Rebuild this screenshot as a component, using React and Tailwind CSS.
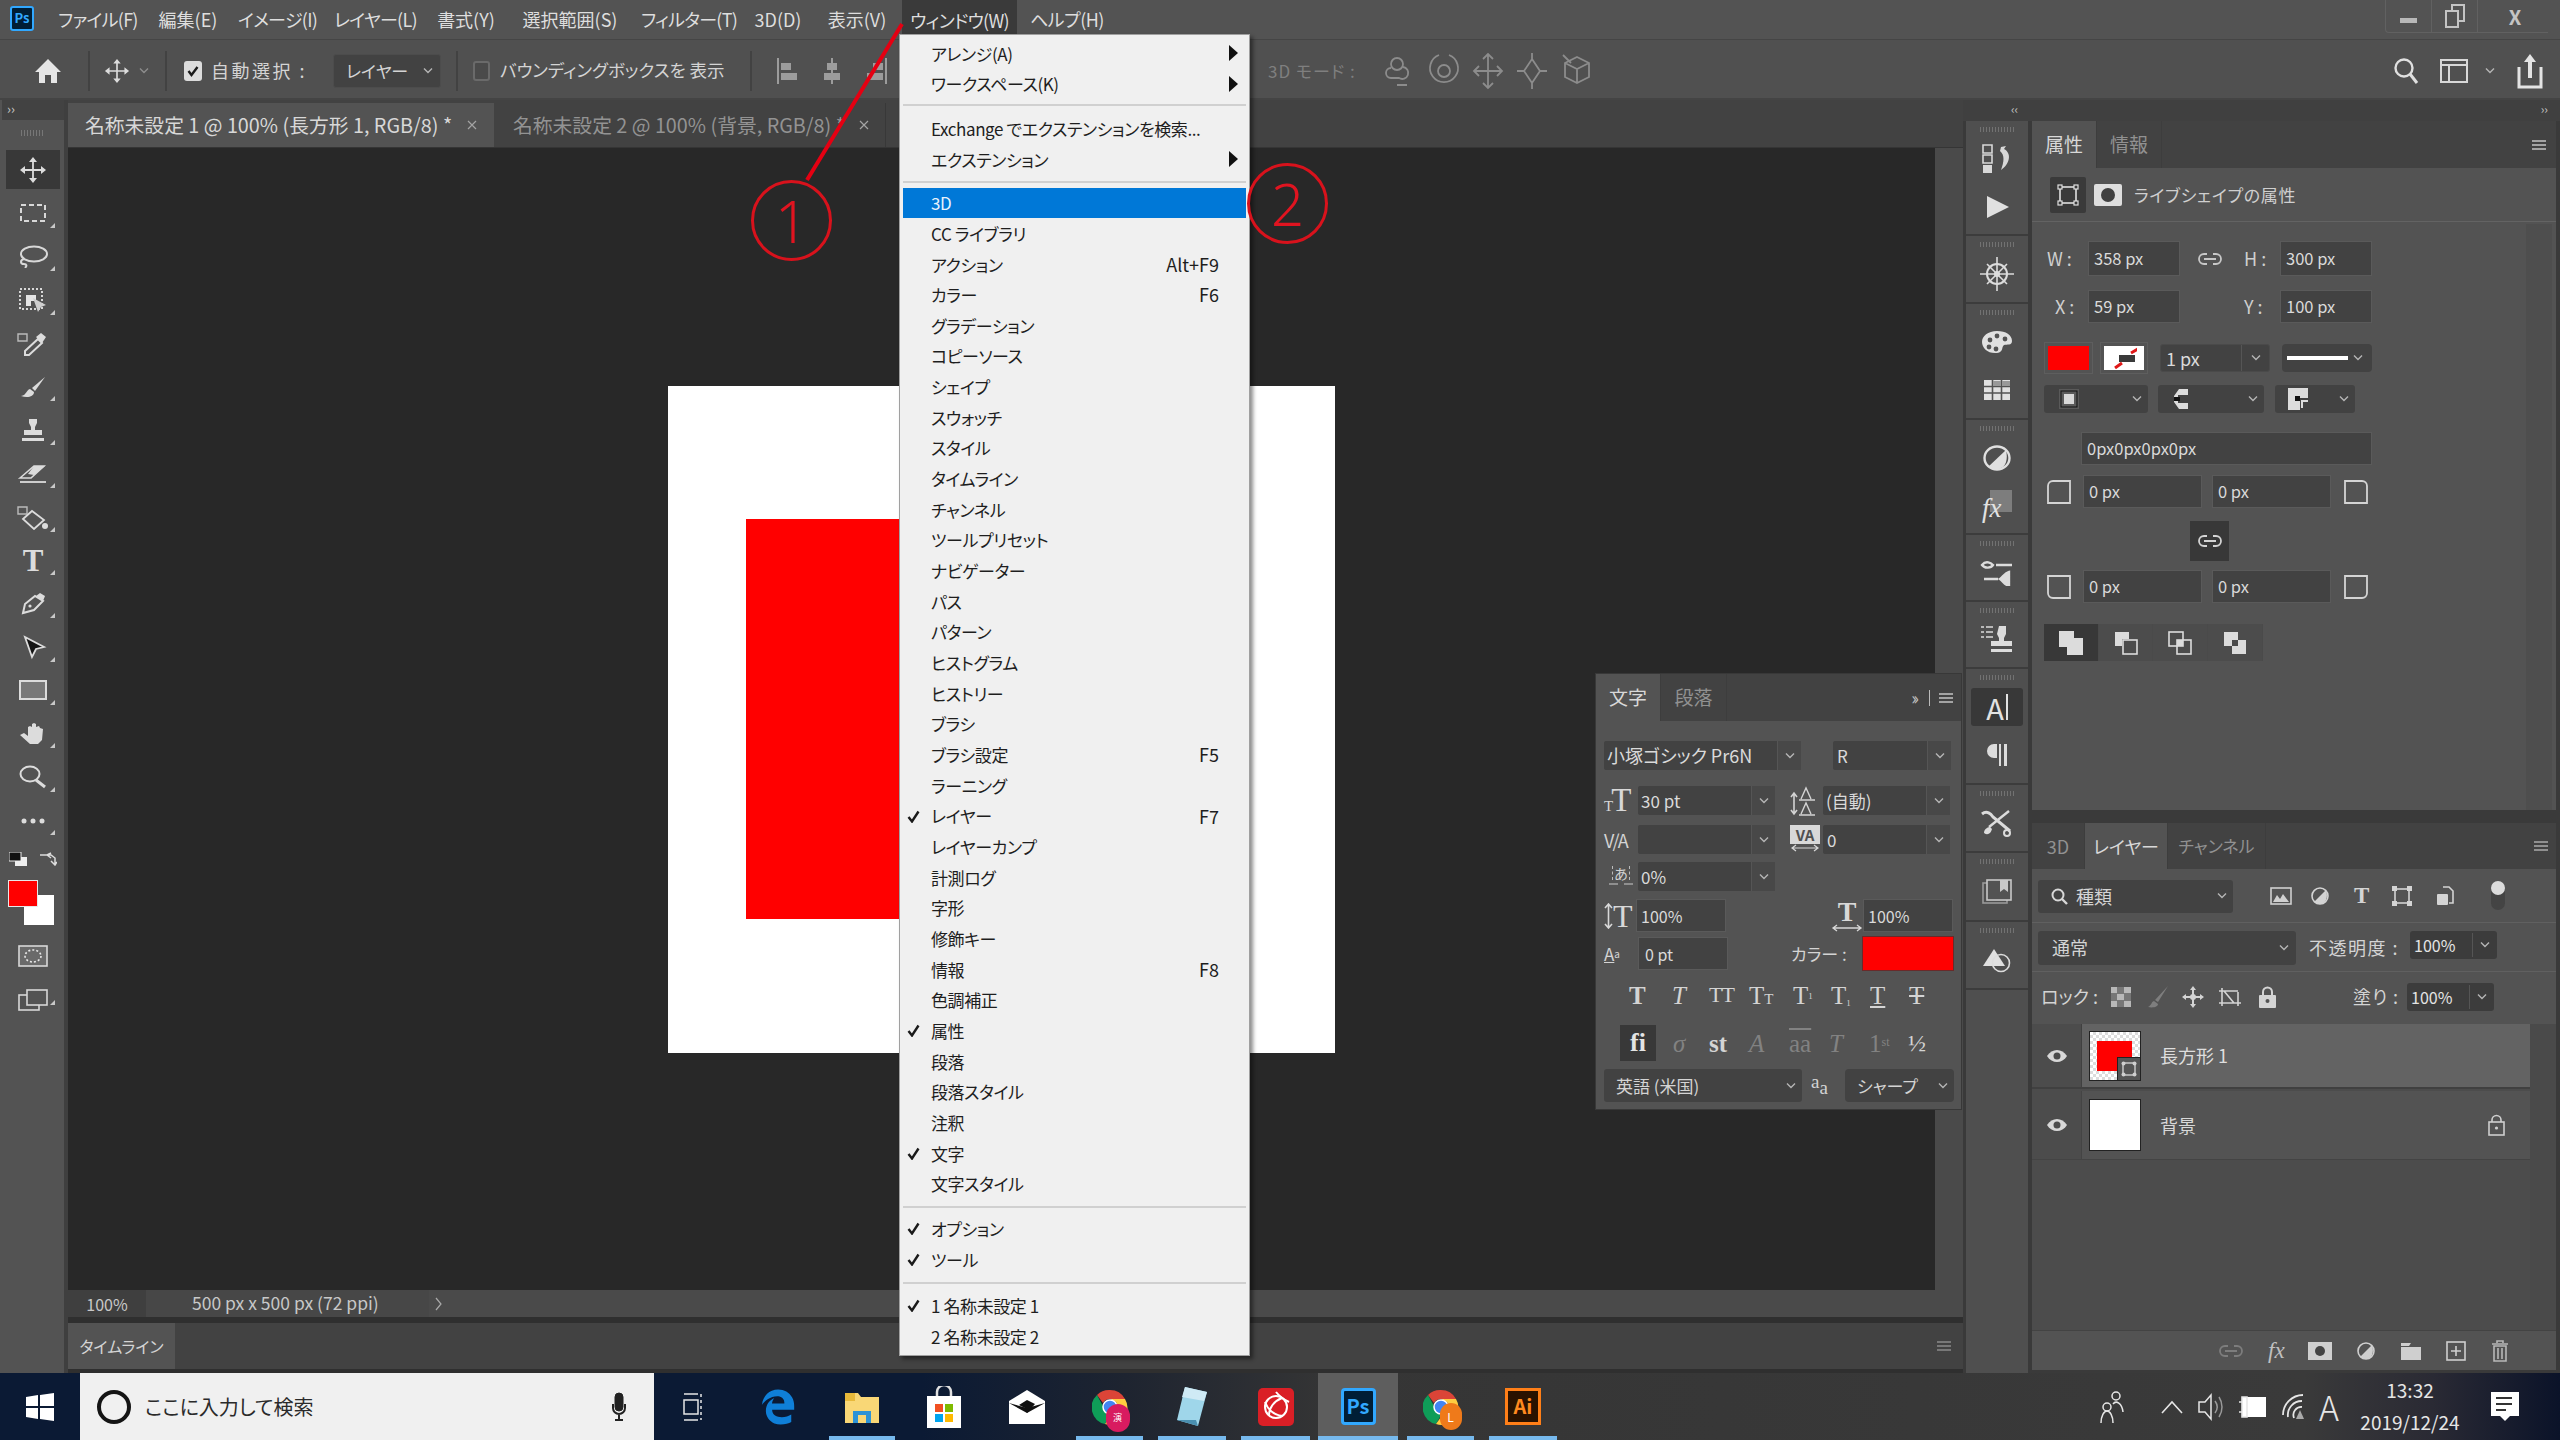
import React from "react";
import { FaEdgeLegacy } from "react-icons/fa6";

const Ic = ({ w = 24, h = 24, className = "", children }) => (
  <svg width={w} height={h} viewBox={`0 0 ${w} ${h}`} fill="none" className={`shrink-0 ${className}`}>
    {children}
  </svg>
);

const Chev = ({ c = "#b5b5b5" }) => (
  <Ic w={12} h={8}>
    <path d="M2 1.5l4 4 4-4" stroke={c} strokeWidth="1.4" />
  </Ic>
);

const Burger = ({ c = "#c4c4c4" }) => (
  <Ic w={14} h={12}>
    <path d="M0 2h14M0 6h14M0 10h14" stroke={c} strokeWidth="1.5" />
  </Ic>
);

const MoveIcon = ({ s = 28 }) => (
  <svg width={s} height={s} viewBox="0 0 28 28" className="shrink-0">
    <path d="M14 1l-4 5h8zM14 27l-4-5h8zM1 14l5-4v8zM27 14l-5-4v8z" fill="#dcdcdc" />
    <path d="M14 5v18M5 14h18" stroke="#dcdcdc" strokeWidth="1.8" />
  </svg>
);

const Corner = () => (
  <span className="absolute right-[9px] bottom-[7px] w-0 h-0 border-l-[5px] border-l-transparent border-b-[5px] border-b-[#c8c8c8]" />
);

const tools = [
  { id: "move", on: true, el: <MoveIcon /> },
  { id: "marquee", el: <Ic w={28} h={24}><rect x="2" y="4" width="24" height="16" stroke="#d8d8d8" strokeWidth="2" strokeDasharray="5 3" /></Ic> },
  { id: "lasso", el: <Ic w={30} h={24}><ellipse cx="16" cy="10" rx="13" ry="7.5" stroke="#d8d8d8" strokeWidth="2" /><path d="M6 15c-4 1-4 5 0 5 3 0 3 2 1 4" stroke="#d8d8d8" strokeWidth="2" /></Ic> },
  { id: "object", el: <Ic w={30} h={26}><rect x="2" y="2" width="22" height="20" stroke="#d8d8d8" strokeWidth="2" strokeDasharray="2 2" /><path d="M8 8h10v6h-5v5H8z" fill="#e4e4e4" /><path d="M15 11l13 7-5 2-3 5z" fill="#cfcfcf" /></Ic> },
  { id: "dropper", el: <Ic w={32} h={26}><path d="M1 4h9v7H1z" stroke="#bbb" strokeWidth="1.4" /><path d="M8 21l13-12 4 4-13 12H8z" stroke="#dcdcdc" strokeWidth="2" /><path d="M19 7l5-4 5 4-4 6z" fill="#dcdcdc" /></Ic> },
  { id: "brush", el: <Ic w={28} h={24}><path d="M26 2L13 13l3 3z" fill="#dcdcdc" /><path d="M11 14c-4 1-3 6-9 7 6 2 13 1 13-4z" fill="#dcdcdc" /></Ic> },
  { id: "stamp", el: <Ic w={28} h={26}><path d="M10 2h8v4l-2 4v3h7v5H5v-5h7v-3l-2-4z" fill="#dcdcdc" /><path d="M3 21h22v3H3z" fill="#dcdcdc" /></Ic> },
  { id: "eraser", el: <Ic w={32} h={24}><path d="M3 17L17 5h10L14 17z" stroke="#dcdcdc" strokeWidth="1.6" /><path d="M17 5h11L17 14l-6-1z" fill="#dcdcdc" /><path d="M3 21h26" stroke="#dcdcdc" strokeWidth="1.8" /></Ic> },
  { id: "fill", el: <Ic w={32} h={26}><path d="M1 3h9v7H1z" stroke="#bbb" strokeWidth="1.4" /><path d="M6 15l9-8 12 9-10 9z" stroke="#dcdcdc" strokeWidth="1.8" /><circle cx="28" cy="22" r="3" fill="#dcdcdc" /></Ic> },
  { id: "type", el: <span className="[font-family:'Liberation_Serif',serif] font-bold text-[31px] leading-none text-[#dcdcdc]">T</span> },
  { id: "pen", el: <Ic w={28} h={24}><path d="M4 21l2-9 10-8 8 5-9 9z" stroke="#dcdcdc" strokeWidth="2" /><path d="M17 4l7 5 2-5-5-3z" fill="#dcdcdc" /><circle cx="11" cy="14" r="1.6" fill="#dcdcdc" /></Ic> },
  { id: "arrow", el: <Ic w={28} h={26}><path d="M6 3l19 10-8 2-4 8z" fill="#141414" stroke="#dcdcdc" strokeWidth="1.8" /></Ic> },
  { id: "rect", el: <Ic w={30} h={24}><rect x="2" y="3" width="26" height="18" fill="#787878" stroke="#dcdcdc" strokeWidth="2" /></Ic> },
  { id: "hand", el: <Ic w={28} h={26}><path d="M1 14l4-2 4 3V6l2-1 2 1V3l2-1 2 1v3l3-1 1 2 3 1-1 11-4 4H11z" fill="#dcdcdc" /></Ic> },
  { id: "zoom", el: <Ic w={30} h={26}><ellipse cx="12" cy="10" rx="9.5" ry="7.5" stroke="#dcdcdc" strokeWidth="2" /><path d="M18 16l9 7" stroke="#dcdcdc" strokeWidth="3" /></Ic> },
  { id: "more", el: <Ic w={28} h={8}><circle cx="5" cy="4" r="2.5" fill="#dcdcdc" /><circle cx="14" cy="4" r="2.5" fill="#dcdcdc" /><circle cx="23" cy="4" r="2.5" fill="#dcdcdc" /></Ic> },
];

const LeftBar = () => (
  <div className="w-[68px] shrink-0 flex border-r-4 border-[#3f3f3f] bg-[#535353] pl-[2px]">
    <div className="w-full flex flex-col">
      <div className="h-[20px] bg-[#424242] text-[#c8c8c8] text-[13px] leading-[18px] pl-[5px]">››</div>
      <div className="h-[28px] flex justify-center pt-[10px]">
        <span className="w-[24px] h-[6px] bg-[repeating-linear-gradient(90deg,#777_0_1px,transparent_1px_3px)]" />
      </div>
      {tools.map((t, i) => (
        <div key={t.id} className="h-[43.4px] flex items-center justify-center relative">
          {t.on && <span className="absolute inset-x-[4px] inset-y-[2px] bg-[#383838]" />}
          <span className="relative flex">{t.el}</span>
          {!t.on && i !== 4 && <Corner />}
        </div>
      ))}
      <div className="flex items-center justify-between px-[7px] mt-[8px] h-[18px]">
        <Ic w={18} h={14}><rect x="6" y="5" width="12" height="9" fill="#eee" /><rect x="0" y="0" width="12" height="9" fill="#111" stroke="#eee" /></Ic>
        <Ic w={18} h={14}><path d="M1 3h11l4 3v6M12 1L8 3l4 3M12 9l4 4 2-3" stroke="#dcdcdc" strokeWidth="1.5" /></Ic>
      </div>
      <div className="h-[46px] mt-[12px] ml-[6px]">
        <div className="w-[30px] h-[27px] bg-[#ff0000] border border-[#e8e8e8] relative z-10" />
        <div className="w-[30px] h-[30px] bg-white ml-[16px] -mt-[12px]" />
      </div>
      <div className="flex justify-center mt-[18px]">
        <Ic w={30} h={24}><rect x="1" y="2" width="28" height="20" fill="#6a6a6a" stroke="#d8d8d8" strokeWidth="1.6" /><ellipse cx="15" cy="12" rx="8" ry="6" stroke="#e8e8e8" strokeWidth="1.6" strokeDasharray="2 2" /></Ic>
      </div>
      <div className="flex justify-center mt-[20px] relative">
        <Ic w={30} h={24}><rect x="1" y="7" width="20" height="15" stroke="#d8d8d8" strokeWidth="1.6" /><rect x="9" y="2" width="20" height="15" fill="#535353" stroke="#d8d8d8" strokeWidth="1.6" /></Ic>
        <Corner />
      </div>
    </div>
  </div>
);

const menuBar = [
  ["ファイル(F)", "w-[80px] ml-[58px] tracking-[-0.7px]"],
  ["編集(E)", "w-[62px] ml-[19px]"],
  ["イメージ(I)", "w-[76px] ml-[19px] tracking-[-0.7px]"],
  ["レイヤー(L)", "w-[80px] ml-[20px] tracking-[-0.7px]"],
  ["書式(Y)", "w-[62px] ml-[21px]"],
  ["選択範囲(S)", "w-[104px] ml-[21px]"],
  ["フィルター(T)", "w-[92px] ml-[19px] tracking-[-0.7px]"],
  ["3D(D)", "w-[52px] ml-[19px]"],
  ["表示(V)", "w-[66px] ml-[20px]"],
];

const MenuBar = () => (
  <div className="h-[40px] shrink-0 bg-[#535353] border-b border-[#454545] flex items-center text-[18px] text-[#dedede] relative">
    <span className="absolute left-[10px] top-[6px] w-[24px] h-[25px] rounded-[3px] bg-[#001e36] border-2 border-[#31a8ff] text-[#31a8ff] text-[13px] leading-[20px] text-center font-semibold">Ps</span>
    {menuBar.map(([t, c]) => (
      <span key={t} className={`${c} whitespace-nowrap shrink-0 text-center`}>{t}</span>
    ))}
    <span className="ml-[12px] w-[115px] h-[40px] bg-[#3a3a3a] text-center leading-[40px] whitespace-nowrap shrink-0 tracking-[-0.7px]">ウィンドウ(W)</span>
    <span className="ml-[13px] w-[73px] text-center whitespace-nowrap shrink-0 tracking-[-0.5px]">ヘルプ(H)</span>
    <div className="ml-auto mr-[12px] w-[163px] h-[33px] self-start rounded-bl-[4px] border-l border-b border-[#616161] flex items-center text-[#c4c4c4]">
      <span className="w-[46px] flex justify-center border-r border-[#616161] h-full items-center"><span className="w-[17px] h-[5px] bg-[#b8b8b8] mt-[8px]" /></span>
      <span className="w-[46px] flex justify-center border-r border-[#616161] h-full items-center">
        <Ic w={24} h={26}><rect x="9" y="2" width="12" height="16" stroke="#c4c4c4" strokeWidth="2" /><rect x="3" y="8" width="12" height="16" fill="#535353" stroke="#c4c4c4" strokeWidth="2" /></Ic>
      </span>
      <span className="flex-1 text-center text-[20px] font-bold leading-[33px] pl-[4px]">X</span>
    </div>
  </div>
);

const VSep = ({ className = "" }) => <span className={`w-[2px] h-[40px] bg-[#424242] shrink-0 ${className}`} />;

const AlignIcon = ({ d }) => (
  <Ic w={22} h={30}><path d={d} fill="#9c9c9c" /></Ic>
);

const Icon3d = ({ children }) => (
  <Ic w={34} h={40}><g stroke="#8c8c8c" strokeWidth="1.8">{children}</g></Ic>
);

const OptionsBar = () => (
  <div className="h-[60px] shrink-0 bg-[#505050] border-b-2 border-[#444] flex items-center text-[18px] text-[#d4d4d4] pt-[3px]">
    <span className="ml-[34px] w-[28px] flex">
      <Ic w={28} h={26}><path d="M14 1L1 14h4v11h6v-8h6v8h6V14h4z" fill="#e6e6e6" /></Ic>
    </span>
    <VSep className="ml-[26px]" />
    <span className="ml-[14px]"><MoveIcon s={26} /></span>
    <span className="ml-[8px]"><Chev c="#8d8d8d" /></span>
    <VSep className="ml-[15px]" />
    <span className="ml-[17px] w-[18px] h-[20px] rounded-[3px] bg-[#dcdcdc] flex items-center justify-center shrink-0">
      <Ic w={12} h={12}><path d="M1.5 6l3 4 6-8" stroke="#1a1a1a" strokeWidth="2.4" /></Ic>
    </span>
    <span className="ml-[9px] w-[99px] whitespace-nowrap tracking-[2.5px]">自動選択 :</span>
    <div className="ml-[23px] w-[108px] h-[34px] bg-[#424242] border border-[#4c4c4c] rounded-[3px] flex items-center pl-[12px] pr-[6px] justify-between text-[17px]">
      <span>レイヤー</span><Chev />
    </div>
    <VSep className="ml-[15px]" />
    <span className="ml-[15px] w-[17px] h-[20px] rounded-[3px] bg-[#4a4a4a] border-2 border-[#6a6a6a] shrink-0" />
    <span className="ml-[10px] w-[226px] whitespace-nowrap text-[17.5px]">バウンディングボックスを 表示</span>
    <VSep className="ml-[24px]" />
    <span className="ml-[24px]"><AlignIcon d="M1 2h2v26H1zM5 7h10v7H5zM5 17h16v7H5z" /></span>
    <span className="ml-[23px]"><AlignIcon d="M10 2h2v26h-2zM6 7h10v7H6zM3 17h16v7H3z" /></span>
    <span className="ml-[23px]"><AlignIcon d="M19 2h2v26h-2zM7 7h10v7H7zM1 17h16v7H1z" /></span>
    <span className="ml-[380px] w-[90px] text-[#7f7f7f] whitespace-nowrap tracking-[1px] text-[17px]">3D モード :</span>
    <div className="ml-[25px] flex gap-[10px]">
      <Icon3d><circle cx="14" cy="13" r="6" /><path d="M20 16a6 6 0 1 1-4 11H8a5 5 0 0 1 0-10M24 34h-10" /></Icon3d>
      <Icon3d><circle cx="17" cy="20" r="6" /><path d="M12 4a14 14 0 1 0 10 0" /></Icon3d>
      <Icon3d><path d="M17 4v32M3 20h28M12 8l5-5 5 5M12 32l5 5 5-5M8 15l-5 5 5 5M26 15l5 5-5 5" /></Icon3d>
      <Icon3d><path d="M17 8l8 12-8 12-8-12zM17 2v8M17 30v8M2 20h8M24 20h8" /></Icon3d>
      <Icon3d><path d="M18 6l12 6v14l-12 6-12-6V12zM6 12l12 6 12-6M18 18v14M4 4l8 8" /></Icon3d>
    </div>
    <div className="ml-auto flex items-center mr-[17px]">
      <Ic w={26} h={28}><circle cx="11" cy="11" r="8.5" stroke="#e0e0e0" strokeWidth="2.4" /><path d="M17 17l7 9" stroke="#e0e0e0" strokeWidth="3" /></Ic>
      <Ic w={28} h={26} className="ml-[21px]"><rect x="1" y="2" width="26" height="22" stroke="#d8d8d8" strokeWidth="2" /><path d="M1 7h26M9 7v17" stroke="#d8d8d8" strokeWidth="2" /></Ic>
      <span className="ml-[16px]"><Chev /></span>
      <Ic w={26} h={36} className="ml-[21px]"><path d="M2 14v20h22V14" stroke="#e4e4e4" strokeWidth="3" /><path d="M13 1l-6 8h4v16h4V9h4z" fill="#e4e4e4" /></Ic>
    </div>
  </div>
);

const X = ({ c }) => (
  <Ic w={12} h={12}><path d="M2 2l8 8M10 2l-8 8" stroke={c} strokeWidth="1.2" /></Ic>
);

const CenterColumn = () => (
  <div className="w-[1895px] shrink-0 flex flex-col bg-[#2f2f2f]">
    <div className="h-[48px] shrink-0 flex pt-[3px] bg-[#424242] text-[19.8px] border-b border-[#353535]">
      <div className="w-[426px] bg-[#535353] flex items-center pl-[17px] text-[#d8d8d8] whitespace-nowrap">
        <span className="w-[381px]">名称未設定 1 @ 100% (長方形 1, RGB/8) *</span><X c="#a4a4a4" />
      </div>
      <div className="w-[392px] border-r border-[#383838] flex items-center pl-[19px] text-[#939393] whitespace-nowrap">
        <span className="w-[345px]">名称未設定 2 @ 100% (背景, RGB/8) *</span><X c="#a4a4a4" />
      </div>
    </div>
    <div className="h-[1142px] flex">
      <div className="flex-1 bg-[#282828] flex items-center justify-center">
        <div className="w-[667px] h-[667px] bg-white pt-[133px] pl-[78px]">
          <div className="w-[477px] h-[400px] bg-[#ff0000]" />
        </div>
      </div>
      <div className="w-[28px] bg-[#4a4a4a]" />
    </div>
    <div className="h-[27px] flex bg-[#4a4a4a] text-[16px] text-[#c8c8c8] items-stretch">
      <span className="w-[78px] bg-[#3f3f3f] flex items-center justify-center">100%</span>
      <span className="w-[283px] bg-[#474747] flex items-center pl-[46px] whitespace-nowrap text-[17.5px]">500 px x 500 px (72 ppi)</span>
      <span className="w-[20px] bg-[#4a4a4a] flex items-center justify-center"><Ic w={8} h={14}><path d="M1 1l5 6-5 6" stroke="#aaa" strokeWidth="1.2" /></Ic></span>
    </div>
    <div className="h-[46px] mt-[6px] bg-[#424242] flex items-stretch">
      <span className="w-[107px] bg-[#535353] flex items-center justify-center text-[16px] text-[#d4d4d4]">タイムライン</span>
      <span className="ml-auto mr-[12px] self-center"><Burger c="#8a8a8a" /></span>
    </div>
  </div>
);

const dockGroups = [
  { h: "h-[115px]", icons: [
    <Ic key="a" w={32} h={30}><path d="M2 1h9v8H2zM2 11h9v8H2z" stroke="#d8d8d8" strokeWidth="1.6" /><path d="M2 21h9v8H2z" fill="#d8d8d8" /><path d="M20 3l5-1-2 3c8 4 6 15-3 21 3-8 4-15-1-19z" fill="#d8d8d8" /></Ic>,
    <Ic key="b" w={26} h={26}><path d="M3 2l22 11L3 24z" fill="#e0e0e0" /></Ic>] },
  { h: "h-[68px]", icons: [
    <Ic key="a" w={34} h={34}><circle cx="17" cy="17" r="10" stroke="#dcdcdc" strokeWidth="2" /><path d="M17 0v34M0 17h34M7 7l20 20M27 7L7 27" stroke="#dcdcdc" strokeWidth="1.6" /><circle cx="17" cy="17" r="3" fill="#dcdcdc" /></Ic>] },
  { h: "h-[116px]", icons: [
    <Ic key="a" w={32} h={24}><path d="M16 1c9 0 15 4 15 10 0 5-5 3-8 4-3 2 0 7-7 8C7 24 1 18 1 12S7 1 16 1z" fill="#e0e0e0" /><circle cx="9" cy="10" r="2.4" fill="#535353" /><circle cx="16" cy="6" r="2.4" fill="#535353" /><circle cx="24" cy="9" r="2.4" fill="#535353" /><circle cx="8" cy="17" r="2.4" fill="#535353" /><circle cx="15" cy="19" r="2.4" fill="#535353" /></Ic>,
    <Ic key="b" w={28} h={22}><rect x="1" y="1" width="26" height="20" fill="#e0e0e0" /><path d="M1 7.5h26M1 14h26M9.5 1v20M18.5 1v20" stroke="#535353" strokeWidth="1.6" /><rect x="10" y="2" width="8" height="5" fill="#999" /><rect x="19" y="2" width="8" height="5" fill="#999" /></Ic>] },
  { h: "h-[115px]", icons: [
    <Ic key="a" w={28} h={26}><ellipse cx="14" cy="13" rx="12.5" ry="11.5" stroke="#e0e0e0" strokeWidth="2.4" /><path d="M23 5L5 22c10 6 22 1 18-17z" fill="#e0e0e0" /></Ic>,
    <div key="b" className="relative w-[30px] h-[32px]">
      <span className="absolute right-0 top-0 w-[22px] h-[22px] bg-[#7d7d7d]" />
      <span className="absolute left-0 bottom-0 [font-family:'Liberation_Serif',serif] italic text-[27px] leading-[27px] text-[#e2e2e2]">fx</span>
    </div>] },
  { h: "h-[67px]", icons: [
    <Ic key="a" w={34} h={26}><path d="M2 5c4-5 9-2 11 0-2 3-8 4-11 0zM16 5h16" stroke="#dcdcdc" strokeWidth="2.4" /><path d="M4 19h14M20 19c3-2 5-6 9-7v14c-4-1-6-5-9-7z" stroke="#dcdcdc" strokeWidth="2.4" fill="#dcdcdc" /></Ic>] },
  { h: "h-[67px]", icons: [
    <Ic key="a" w={34} h={30}><path d="M1 2h3M6 2h7M1 7h3M6 7h7M1 12h3M6 12h7" stroke="#dcdcdc" strokeWidth="1.6" /><path d="M19 1h7v8l-2 4v3h8v5H11v-5h8v-3l-2-4z" fill="#dcdcdc" /><path d="M11 24h21v3H11z" fill="#dcdcdc" /></Ic>] },
  { h: "h-[116px]", on: 0, icons: [
    <div key="a" className="flex items-center text-[29px] text-[#e2e2e2] leading-none"><span>A</span><span className="w-[2px] h-[26px] bg-[#e2e2e2] ml-[2px]" /></div>,
    <Ic key="b" w={24} h={26}><path d="M22 2H9a7 7 0 0 0 0 14h3V2zM14 2v22h2V2zM19 2v22h3V2z" fill="#dcdcdc" /></Ic>] },
  { h: "h-[68px]", icons: [
    <Ic key="a" w={32} h={28}><path d="M1 5c5-4 9 0 11 3l17 14" stroke="#dcdcdc" strokeWidth="3" /><path d="M28 2L8 18" stroke="#dcdcdc" strokeWidth="2.4" /><path d="M3 24c0-5 5-6 6-6l2 2c-1 4-4 7-8 4z" fill="#dcdcdc" /><circle cx="26" cy="24" r="3" stroke="#dcdcdc" strokeWidth="2" /></Ic>] },
  { h: "h-[69px]", icons: [
    <Ic key="a" w={30} h={26}><rect x="1" y="5" width="24" height="20" stroke="#999" strokeWidth="1.6" /><rect x="5" y="2" width="24" height="20" fill="#535353" stroke="#c8c8c8" strokeWidth="1.6" /><path d="M18 2h8v12l-4-3-4 3z" fill="#c8c8c8" /></Ic>] },
  { h: "h-[68px]", icons: [
    <Ic key="a" w={30} h={26}><path d="M12 2l11 17H1z" fill="#e0e0e0" /><circle cx="19" cy="16" r="8.5" stroke="#dcdcdc" strokeWidth="1.6" /></Ic>] },
];

const Grip = () => (
  <span className="h-[14px] shrink-0 w-full flex justify-center pt-[6px]">
    <span className="w-[34px] h-[5px] bg-[repeating-linear-gradient(90deg,#727272_0_1px,transparent_1px_3px)]" />
  </span>
);

const Dock = () => (
  <div className="w-[62px] shrink-0 ml-[3px] bg-[#4f4f4f] border-r-0 flex flex-col">
    {dockGroups.map((g, i) => (
      <div key={i} className={`${g.h} shrink-0 flex flex-col items-center border-b-2 border-[#3c3c3c]`}>
        <Grip />
        {g.icons.map((icon, j) => (
          <div key={j} className={`h-[48px] w-full flex items-center justify-center shrink-0 ${g.on === j ? "px-[5px]" : ""}`}>
            {g.on === j ? <span className="w-full h-[38px] rounded-[3px] bg-[#383838] flex items-center justify-center">{icon}</span> : icon}
          </div>
        ))}
      </div>
    ))}
  </div>
);

const Tab = ({ on, w, children }) => (
  <span className={`${w} shrink-0 flex items-center justify-center border-r border-[#3d3d3d] text-[19px] ${on ? "bg-[#535353] text-[#d8d8d8]" : "text-[#919191]"}`}>
    {children}
  </span>
);

const Field = ({ w, h = "h-[33px]", children, chev, cell, cls = "", r = "" }) => (
  <div className={`${w} ${h} ${cls} ${r} shrink-0 bg-[#424242] border border-[#5a5a5a] flex items-center text-[16.5px] text-[#dadada] whitespace-nowrap`}>
    <span className="flex-1 pl-[5px] overflow-hidden">{children}</span>
    {chev && <span className={`${cell ? "border-l border-[#555] " : ""}w-[28px] h-full flex items-center justify-center`}><Chev /></span>}
  </div>
);

const CornerIcon = ({ d }) => (
  <Ic w={24} h={24}><path d={d} stroke="#d4d4d4" strokeWidth="1.8" /></Ic>
);

const BoolBtn = ({ on, w, children }) => (
  <span className={`${w} h-[37px] flex items-center justify-center border-r border-[#4a4a4a] ${on ? "bg-[#383838]" : "bg-[#4c4c4c]"}`}>{children}</span>
);

const PropertiesPanel = () => (
  <div className="h-[689px] shrink-0 bg-[#535353] flex flex-col">
    <div className="h-[47px] shrink-0 flex bg-[#424242] items-stretch">
      <Tab on w="w-[65px]">属性</Tab>
      <Tab w="w-[65px]">情報</Tab>
      <span className="ml-auto mr-[10px] self-center"><Burger /></span>
    </div>
    <div className="h-[54px] shrink-0 flex items-center border-b border-[#636363] pl-[18px]">
      <span className="w-[36px] h-[36px] bg-[#3a3a3a] rounded-[2px] flex items-center justify-center">
        <Ic w={22} h={22}><rect x="3" y="3" width="16" height="16" stroke="#e0e0e0" strokeWidth="1.6" /><g fill="#3a3a3a" stroke="#e0e0e0" strokeWidth="1.2"><rect x="1" y="1" width="4" height="4" /><rect x="17" y="1" width="4" height="4" /><rect x="1" y="17" width="4" height="4" /><rect x="17" y="17" width="4" height="4" /></g></Ic>
      </span>
      <span className="ml-[8px] w-[28px] h-[22px] bg-[#dedede] rounded-[2px] flex items-center justify-center"><span className="w-[14px] h-[14px] rounded-full bg-[#404040]" /></span>
      <span className="ml-[12px] text-[17px] text-[#cfcfcf] whitespace-nowrap tracking-[0.7px]">ライブシェイプの属性</span>
    </div>
    <div className="flex-1 flex">
      <div className="flex-1 flex flex-col text-[#cfcfcf]">
        <div className="flex items-center mt-[19px] pl-[15px] text-[18px]">
          <span className="w-[41px]">W :</span>
          <Field w="w-[92px]" h="h-[35px]">358 px</Field>
          <span className="ml-[18px] w-[46px]"><Ic w={24} h={14}><path d="M9 2H6a5 5 0 0 0 0 10h3M15 2h3a5 5 0 0 1 0 10h-3M6 7h12" stroke="#c8c8c8" strokeWidth="1.8" /></Ic></span>
          <span className="ml-[0px] w-[36px]">H :</span>
          <Field w="w-[92px]" h="h-[35px]">300 px</Field>
        </div>
        <div className="flex items-center mt-[14px] pl-[23px] text-[18px]">
          <span className="w-[33px]">X :</span>
          <Field w="w-[92px]">59 px</Field>
          <span className="ml-[64px] w-[36px]">Y :</span>
          <Field w="w-[92px]">100 px</Field>
        </div>
        <div className="flex items-center mt-[19px] pl-[12px]">
          <span className="w-[49px] h-[32px] border border-[#5e5e5e] p-[3px] flex"><span className="flex-1 bg-[#ff0000]" /></span>
          <span className="ml-[7px] w-[48px] h-[32px] border border-[#5e5e5e] p-[3px] flex">
            <span className="flex-1 bg-white flex items-center justify-center">
              <Ic w={26} h={22}><path d="M8 8h16v7H8z" fill="#3a3a3a" /><path d="M20 6l7-4M4 21l7-5" stroke="#e01818" strokeWidth="3" /></Ic>
            </span>
          </span>
          <Field w="w-[110px]" h="h-[28px]" cls="ml-[12px] rounded-[3px] !border-[#4a4a4a]" chev cell>
            <span className="text-[18px]">1 px</span>
          </Field>
          <div className="ml-[12px] w-[90px] h-[28px] rounded-[4px] bg-[#424242] flex items-center pl-[5px] gap-[4px]">
            <span className="w-[61px] h-[4px] bg-white" /><Chev />
          </div>
        </div>
        <div className="flex items-center mt-[11px] pl-[12px]">
          <div className="w-[104px] h-[28px] rounded-[3px] bg-[#424242] flex items-center justify-between pl-[14px] pr-[5px]">
            <Ic w={22} h={24}><rect x="1" y="2" width="20" height="20" fill="#5a5a5a" /><rect x="3" y="4" width="16" height="16" stroke="#111" /><rect x="6" y="7" width="10" height="10" fill="#d8d8d8" /></Ic><Chev />
          </div>
          <div className="ml-[10px] w-[106px] h-[28px] rounded-[3px] bg-[#424242] flex items-center justify-between pl-[15px] pr-[5px]">
            <Ic w={16} h={20}><path d="M6 0h9v6H5v8h10v6H6l-5-7V7z" fill="#dcdcdc" /><rect x="1" y="8" width="6" height="4" fill="#111" /></Ic><Chev />
          </div>
          <div className="ml-[11px] w-[80px] h-[28px] rounded-[3px] bg-[#424242] flex items-center justify-between pl-[13px] pr-[5px]">
            <Ic w={22} h={22}><path d="M0 0h20v10h-8v12H0z" fill="#dcdcdc" /><path d="M13 12h7v2h-5v6h-2z" fill="#dcdcdc" /><rect x="7" y="8" width="5" height="5" fill="#111" /></Ic><Chev />
          </div>
        </div>
        <div className="flex mt-[19px] pl-[49px]">
          <Field w="w-[291px]">0px0px0px0px</Field>
        </div>
        <div className="flex items-center mt-[10px] pl-[15px]">
          <CornerIcon d="M6 1h17v22H1V6a5 5 0 0 1 5-5z" />
          <Field w="w-[119px]" cls="ml-[12px]">0 px</Field>
          <Field w="w-[119px]" cls="ml-[10px]">0 px</Field>
          <span className="ml-[13px]"><CornerIcon d="M1 1h17a5 5 0 0 1 5 5v17H1z" /></span>
        </div>
        <div className="flex mt-[13px] pl-[158px]">
          <span className="w-[39px] h-[40px] bg-[#383838] flex items-center justify-center">
            <Ic w={24} h={14}><path d="M9 2H6a5 5 0 0 0 0 10h3M15 2h3a5 5 0 0 1 0 10h-3M6 7h12" stroke="#d4d4d4" strokeWidth="1.8" /></Ic>
          </span>
        </div>
        <div className="flex items-center mt-[9px] pl-[15px]">
          <CornerIcon d="M1 1h22v22H6a5 5 0 0 1-5-5z" />
          <Field w="w-[119px]" cls="ml-[12px]">0 px</Field>
          <Field w="w-[119px]" cls="ml-[10px]">0 px</Field>
          <span className="ml-[13px]"><CornerIcon d="M1 1h22v17a5 5 0 0 1-5 5H1z" /></span>
        </div>
        <div className="flex mt-[21px] pl-[12px]">
          <BoolBtn on w="w-[55px]"><Ic w={26} h={26}><path d="M1 1h15v7h9v17H9v-8H1z" fill="#dcdcdc" /></Ic></BoolBtn>
          <BoolBtn w="w-[54px]"><Ic w={24} h={24}><path d="M1 1h14v7H8v7H1z" fill="#dcdcdc" /><rect x="9" y="9" width="14" height="14" stroke="#dcdcdc" strokeWidth="1.6" /></Ic></BoolBtn>
          <BoolBtn w="w-[55px]"><Ic w={24} h={24}><rect x="1" y="1" width="14" height="14" stroke="#dcdcdc" strokeWidth="1.6" /><rect x="9" y="9" width="14" height="14" stroke="#dcdcdc" strokeWidth="1.6" /><rect x="9" y="9" width="6" height="6" fill="#dcdcdc" /></Ic></BoolBtn>
          <BoolBtn w="w-[55px]"><Ic w={24} h={24}><path d="M1 1h14v8H9v6H1zM15 9h8v14H9v-8h6z" fill="#dcdcdc" /></Ic></BoolBtn>
        </div>
      </div>
      <div className="w-[26px] bg-[#4e4e4e] mr-[4px] mt-[2px]" />
    </div>
  </div>
);

const Eye = () => (
  <Ic w={22} h={14}><path d="M1 7c5-8 15-8 20 0-5 8-15 8-20 0z" fill="#d8d8d8" /><circle cx="11" cy="7" r="3.5" fill="#4c4c4c" /></Ic>
);

const LayersPanel = () => (
  <div className="h-[547px] mt-[13px] shrink-0 bg-[#535353] flex flex-col text-[#d4d4d4]">
    <div className="h-[46px] shrink-0 flex bg-[#424242] items-stretch">
      <Tab w="w-[53px]"><span className="text-[18px]">3D</span></Tab>
      <Tab on w="w-[83px]"><span className="text-[18px]">レイヤー</span></Tab>
      <Tab w="w-[98px]"><span className="text-[17px]">チャンネル</span></Tab>
      <span className="ml-auto mr-[8px] self-center"><Burger c="#aaa" /></span>
    </div>
    <div className="h-[54px] shrink-0 border-b border-[#606060] flex items-center pl-[6px]">
      <div className="w-[195px] h-[33px] mt-[1px] rounded-[3px] bg-[#424242] flex items-center pl-[12px] pr-[5px] text-[18px]">
        <Ic w={18} h={18}><circle cx="8" cy="8" r="5.5" stroke="#d8d8d8" strokeWidth="2" /><path d="M12 12l5 5" stroke="#d8d8d8" strokeWidth="2.4" /></Ic>
        <span className="ml-[8px] flex-1">種類</span><Chev />
      </div>
      <Ic w={22} h={18} className="ml-[37px]"><rect x="1" y="1" width="20" height="16" stroke="#d0d0d0" strokeWidth="1.6" /><path d="M3 15l4-7 3 4 3-5 6 8z" fill="#d0d0d0" /></Ic>
      <Ic w={20} h={20} className="ml-[18px]"><circle cx="10" cy="10" r="8" stroke="#d4d4d4" strokeWidth="1.6" /><path d="M16 4L4 16c6 5 16 1 12-12z" fill="#d4d4d4" /></Ic>
      <span className="ml-[24px] w-[16px] [font-family:'Liberation_Serif',serif] font-bold text-[23px] leading-none">T</span>
      <Ic w={20} h={20} className="ml-[22px]"><rect x="3" y="3" width="14" height="14" stroke="#d4d4d4" strokeWidth="1.6" /><g fill="#d4d4d4"><rect x="0" y="0" width="5" height="5" /><rect x="15" y="0" width="5" height="5" /><rect x="0" y="15" width="5" height="5" /><rect x="15" y="15" width="5" height="5" /></g></Ic>
      <Ic w={18} h={20} className="ml-[24px]"><path d="M7 1h6l4 4v12h-4" stroke="#d4d4d4" strokeWidth="1.6" /><rect x="1" y="8" width="11" height="11" rx="1" fill="#d4d4d4" /></Ic>
      <span className="ml-[37px] w-[14px] h-[26px] rounded-full bg-[#444] relative mt-[3px]">
        <span className="absolute left-0 -top-[3px] w-[14px] h-[14px] rounded-full bg-[#dcdcdc]" />
      </span>
    </div>
    <div className="h-[49px] shrink-0 border-b border-[#606060] flex items-center pl-[6px]">
      <div className="w-[258px] h-[34px] mt-[1px] rounded-[3px] bg-[#424242] flex items-center justify-between pl-[14px] pr-[6px] text-[18px]">
        通常<Chev />
      </div>
      <span className="ml-[13px] w-[101px] text-[18px] whitespace-nowrap tracking-[1.5px]">不透明度 :</span>
      <div className="w-[87px] h-[28px] -mt-[4px] rounded-[3px] bg-[#3c3c3c] flex items-center text-[16px] text-[#e4e4e4]">
        <span className="w-[63px] pl-[4px] border-r border-[#555]">100%</span><span className="flex-1 flex justify-center"><Chev /></span>
      </div>
    </div>
    <div className="h-[52px] shrink-0 flex items-center pl-[9px] pb-[3px] text-[18px]">
      <span className="w-[68px] whitespace-nowrap">ロック :</span>
      <Ic w={20} h={20} className="ml-[2px]"><rect width="20" height="20" fill="#777" /><path d="M0 0h6v6H0zM13 0h7v6h-7zM6 7h7v6H6zM0 14h6v6H0zM13 14h7v6h-7z" fill="#b8b8b8" /></Ic>
      <Ic w={24} h={24} className="ml-[15px]"><path d="M22 1L9 15l3 2zM8 16c-3 1-2 4-6 6 5 1 10 0 10-3z" fill="#7e7e7e" /></Ic>
      <Ic w={22} h={22} className="ml-[12px]"><path d="M11 0L8 4h6zM11 22l-3-4h6zM0 11l4-3v6zM22 11l-4-3v6z" fill="#d4d4d4" /><path d="M11 3v16M3 11h16" stroke="#d4d4d4" strokeWidth="2" /><circle cx="11" cy="11" r="3" fill="#d4d4d4" /></Ic>
      <Ic w={24} h={20} className="ml-[14px]"><path d="M4 1v18M20 5v14M1 4h19M1 16h22M6 4l10 12" stroke="#d4d4d4" strokeWidth="1.6" /></Ic>
      <Ic w={17} h={22} className="ml-[17px]"><path d="M4 9V6a4.5 4.5 0 0 1 9 0v3" stroke="#d4d4d4" strokeWidth="2" /><rect y="9" width="17" height="13" rx="1" fill="#d4d4d4" /><circle cx="8.5" cy="15" r="2" fill="#535353" /></Ic>
      <span className="ml-[68px] w-[55px] whitespace-nowrap text-right tracking-[1px]">塗り :</span>
      <div className="ml-[8px] w-[87px] h-[28px] rounded-[3px] bg-[#3c3c3c] flex items-center text-[16px] text-[#e4e4e4]">
        <span className="w-[63px] pl-[4px] border-r border-[#555]">100%</span><span className="flex-1 flex justify-center"><Chev /></span>
      </div>
    </div>
    <div className="flex-1 flex bg-[#4c4c4c]">
      <div className="w-[498px] flex flex-col">
        <div className="h-[65px] flex border-b-2 border-[#404040]">
          <span className="w-[50px] flex items-center justify-center border-r border-[#404040]"><Eye /></span>
          <div className="flex-1 bg-[#636363] flex items-center pl-[7px]">
            <div className="w-[52px] h-[50px] bg-white border border-[#222] pl-[7px] pt-[9px] relative bg-[repeating-conic-gradient(#dcdcdc_0_25%,#ffffff_0_50%)] bg-[length:6px_6px]">
              <div className="w-[35px] h-[30px] bg-[#ff0000]" />
              <span className="absolute right-[-1px] bottom-[-1px] w-[24px] h-[24px] bg-[#555] border border-[#222] flex items-center justify-center">
                <Ic w={16} h={16}><rect x="2" y="2" width="12" height="12" stroke="#cfcfcf" strokeWidth="1.4" /><g fill="#cfcfcf"><circle cx="2.5" cy="2.5" r="2" /><circle cx="13.5" cy="2.5" r="2" /><circle cx="2.5" cy="13.5" r="2" /><circle cx="13.5" cy="13.5" r="2" /></g></Ic>
              </span>
            </div>
            <span className="ml-[19px] text-[18px] text-[#dedede]">長方形 1</span>
          </div>
        </div>
        <div className="h-[69px] mt-[2px] flex border-b border-[#444]">
          <span className="w-[50px] flex items-center justify-center border-r border-[#444]"><Eye /></span>
          <div className="flex-1 bg-[#535353] flex items-center pl-[7px]">
            <div className="w-[52px] h-[52px] bg-white border border-[#222]" />
            <span className="ml-[19px] text-[18px] text-[#d8d8d8]">背景</span>
            <Ic w={17} h={22} className="ml-auto mr-[25px]"><path d="M4 8V6a4.5 4.5 0 0 1 9 0v2" stroke="#cfcfcf" strokeWidth="1.6" /><rect x="1" y="8" width="15" height="13" stroke="#cfcfcf" strokeWidth="1.6" /><circle cx="8.5" cy="14" r="1.6" fill="#cfcfcf" /></Ic>
          </div>
        </div>
      </div>
      <div className="w-[26px] bg-[#4a4a4a]" />
    </div>
    <div className="h-[40px] shrink-0 bg-[#535353] border-t border-[#434343] flex items-center pl-[187px]">
      <Ic w={24} h={14}><path d="M9 2H6a5 5 0 0 0 0 10h3M15 2h3a5 5 0 0 1 0 10h-3M6 7h12" stroke="#7d7d7d" strokeWidth="1.8" /></Ic>
      <span className="ml-[25px] w-[24px] [font-family:'Liberation_Serif',serif] italic text-[23px] leading-none text-[#c0c0c0]">fx</span>
      <span className="ml-[16px] w-[24px] h-[18px] bg-[#cfcfcf] flex items-center justify-center"><span className="w-[10px] h-[10px] rounded-full bg-[#444]" /></span>
      <Ic w={20} h={20} className="ml-[24px]"><circle cx="10" cy="10" r="8" stroke="#cfcfcf" strokeWidth="1.6" /><path d="M16 4L4 16c6 5 16 1 12-12z" fill="#cfcfcf" /></Ic>
      <Ic w={20} h={18} className="ml-[25px]"><path d="M0 4h8l2-3H0zM0 5h20v13H0z" fill="#cfcfcf" /></Ic>
      <Ic w={20} h={20} className="ml-[25px]"><rect x="1" y="1" width="18" height="18" stroke="#cfcfcf" strokeWidth="1.6" /><path d="M10 5v10M5 10h10" stroke="#cfcfcf" strokeWidth="1.6" /></Ic>
      <Ic w={18} h={22} className="ml-[25px]"><path d="M1 4h16M6 3V1h6v2M3 6h12v15H3zM7 8v11M11 8v11" stroke="#b8b8b8" strokeWidth="1.6" /></Ic>
    </div>
  </div>
);

const RightColumn = () => (
  <div className="flex-1 flex flex-col bg-[#3a3a3a]">
    <div className="h-[21px] shrink-0 bg-[#404040] relative text-[12px] leading-[18px] text-[#c4c4c4] flex justify-between pl-[48px] pr-[12px]">
      <span>‹‹</span><span>››</span>
    </div>
    <div className="flex-1 flex">
      <Dock />
      <div className="w-[524px] ml-[4px] flex flex-col">
        <PropertiesPanel />
        <LayersPanel />
      </div>
    </div>
  </div>
);

const CharField = ({ w, cls = "", children, chev }) => (
  <div className={`${w} ${cls} h-[29px] shrink-0 rounded-[2px] bg-[#424242] flex items-center text-[17px] text-[#dadada] whitespace-nowrap`}>
    <span className="flex-1 pl-[3px] overflow-hidden">{children}</span>
    {chev && <span className="w-[24px] h-full border-l border-[#555] flex items-center justify-center bg-[#484848]"><Chev /></span>}
  </div>
);

const CharFlat = ({ w, h = "h-[33px]", cls = "", children }) => (
  <div className={`${w} ${h} ${cls} shrink-0 bg-[#424242] border border-[#5a5a5a] flex items-center pl-[4px] text-[16px] text-[#dadada]`}>{children}</div>
);

const serif = "[font-family:'Liberation_Serif',serif]";

const CharacterPanel = () => (
  <div className="absolute left-[1595px] top-[673px] w-[367px] h-[437px] bg-[#535353] border border-[#383838] flex flex-col text-[#d4d4d4]">
    <div className="h-[47px] shrink-0 flex bg-[#424242] items-stretch">
      <Tab on w="w-[65px]">文字</Tab>
      <Tab w="w-[66px]">段落</Tab>
      <span className="ml-auto mr-[8px] flex items-center gap-[9px]">
        <span className="text-[#c0c0c0] text-[18px] tracking-[-3px]">››</span>
        <span className="w-[1px] h-[16px] bg-[#bbb] ml-[4px]" />
        <Burger />
      </span>
    </div>
    <div className="flex mt-[20px] pl-[8px]">
      <CharField w="w-[197px]" chev><span className="text-[18px]">小塚ゴシック Pr6N</span></CharField>
      <CharField w="w-[118px]" cls="ml-[32px]" chev><span className="pl-[1px]">R</span></CharField>
    </div>
    <div className="flex items-center mt-[14px] pl-[8px]">
      <span className={`${serif} w-[34px] flex items-baseline leading-none text-[#d8d8d8]`}><span className="text-[15px]">T</span><span className="text-[33px] -ml-[2px]">T</span></span>
      <CharField w="w-[137px]" chev>30 pt</CharField>
      <Ic w={28} h={30} className="ml-[15px]"><path d="M4 8v20M1 11l3-4 3 4M1 24l3 4 3-4" stroke="#d4d4d4" strokeWidth="1.6" /><path d="M11 13l5-11 5 11M11 28l5-11 5 11M9 14h16M9 29h16" stroke="#d4d4d4" strokeWidth="1.4" /></Ic>
      <CharField w="w-[127px]" cls="ml-[5px]" chev>(自動)</CharField>
    </div>
    <div className="flex items-center mt-[8px] pl-[8px]">
      <span className="w-[34px] text-[18px] leading-none tracking-[-1px]">V/A</span>
      <CharField w="w-[137px]" chev />
      <span className="ml-[15px] w-[30px] flex flex-col items-center -mt-[2px]">
        <span className="bg-[#d8d8d8] text-[#505050] text-[15px] font-bold leading-[19px] w-[30px] text-center">VA</span>
        <Ic w={30} h={8}><path d="M3 4h24M6 1L2 4l4 3M24 1l4 3-4 3" stroke="#d8d8d8" strokeWidth="1.2" /></Ic>
      </span>
      <CharField w="w-[127px]" cls="ml-[3px]" chev><span className="pl-[1px]">0</span></CharField>
    </div>
    <div className="flex items-center mt-[8px] pl-[8px]">
      <span className="w-[34px] text-[14px] leading-none flex flex-col items-center">
        <span className="border-x border-dashed border-[#bbb] px-[1px]">あ</span>
        <Ic w={26} h={8}><path d="M1 4h9M16 4h9" stroke="#ccc" strokeWidth="1.2" /></Ic>
      </span>
      <CharField w="w-[137px]" chev>0%</CharField>
    </div>
    <div className="flex items-center mt-[8px] pl-[8px]">
      <span className={`${serif} w-[32px] flex items-center text-[32px] leading-none text-[#d8d8d8]`}>
        <Ic w={9} h={26}><path d="M4.5 1v24M1 5l3.5-4L8 5M1 21l3.5 4L8 21" stroke="#d8d8d8" strokeWidth="1.6" /></Ic>T
      </span>
      <CharFlat w="w-[90px]">100%</CharFlat>
      <span className={`${serif} ml-[105px] w-[32px] flex flex-col items-center text-[28px] font-bold leading-[24px] text-[#d8d8d8]`}>
        T
        <Ic w={32} h={8}><path d="M3 4h26M6 1L2 4l4 3M26 1l4 3-4 3" stroke="#d8d8d8" strokeWidth="1.3" /></Ic>
      </span>
      <CharFlat w="w-[90px]">100%</CharFlat>
    </div>
    <div className="flex items-center mt-[4px] pl-[8px]">
      <span className="w-[34px] flex items-center text-[17px] leading-none border-b-0"><span className="underline">A</span><span className="text-[10px] leading-none">a</span></span>
      <CharFlat w="w-[90px]"><span className="pl-[2px]">0 pt</span></CharFlat>
      <span className="ml-[63px] w-[71px] text-[17px] whitespace-nowrap">カラー :</span>
      <span className="w-[92px] h-[35px] bg-[#ff0000] border border-[#6a2a2a]" />
    </div>
    <div className={`${serif} h-[32px] mt-[8px] flex items-center text-[#d4d4d4] text-[25px] leading-none pl-[33px]`}>
      <span className="w-[40px] font-bold">T</span>
      <span className="w-[40px] italic pl-[3px]">T</span>
      <span className="w-[40px] tracking-[-1px] text-[22px]">TT</span>
      <span className="w-[39px]">T<span className="text-[15px]">T</span></span>
      <span className="w-[40px] pl-[5px]">T<sup className="text-[9px]">1</sup></span>
      <span className="w-[39px] pl-[3px]">T<sub className="text-[9px]">1</sub></span>
      <span className="w-[40px] underline pl-[3px]">T</span>
      <span className="w-[30px] line-through pl-[2px]">T</span>
    </div>
    <div className={`${serif} h-[36px] mt-[14px] flex items-center text-[25px] leading-none pl-[24px]`}>
      <span className="w-[36px] h-[36px] bg-[#383838] flex items-center justify-center text-[#e4e4e4] font-bold text-[26px]">fi</span>
      <span className="w-[40px] ml-[13px] italic text-[#828282] pl-[4px]">σ</span>
      <span className="w-[40px] text-[#d4d4d4] font-bold">st</span>
      <span className="w-[40px] italic text-[#828282]">A</span>
      <span className="w-[40px] text-[#828282] overline">aa</span>
      <span className="w-[40px] italic text-[#828282]">T</span>
      <span className="w-[39px] text-[#828282]">1<sup className="text-[12px]">st</sup></span>
      <span className="w-[24px] text-[#d4d4d4] text-[24px]">½</span>
    </div>
    <div className="flex items-center mt-[8px] pl-[8px]">
      <div className="w-[198px] h-[33px] rounded-[3px] bg-[#424242] flex items-center justify-between pl-[12px] pr-[5px] text-[17px]">
        英語 (米国)<Chev />
      </div>
      <span className={`${serif} ml-[9px] w-[34px] text-[19px] leading-none flex`}><span className="-mt-[3px]">a</span><span className="mt-[3px]">a</span></span>
      <div className="w-[109px] h-[33px] rounded-[4px] bg-[#424242] flex items-center justify-between pl-[12px] pr-[5px] text-[17px]">
        シャープ<Chev />
      </div>
    </div>
  </div>
);

const menuGroups = [
  [{ t: "アレンジ(A)", arrow: true }, { t: "ワークスペース(K)", arrow: true }],
  [{ t: "Exchange でエクステンションを検索..." }, { t: "エクステンション", arrow: true }],
  [
    { t: "3D", hot: true }, { t: "CC ライブラリ" }, { t: "アクション", key: "Alt+F9" }, { t: "カラー", key: "F6" },
    { t: "グラデーション" }, { t: "コピーソース" }, { t: "シェイプ" }, { t: "スウォッチ" }, { t: "スタイル" },
    { t: "タイムライン" }, { t: "チャンネル" }, { t: "ツールプリセット" }, { t: "ナビゲーター" }, { t: "パス" },
    { t: "パターン" }, { t: "ヒストグラム" }, { t: "ヒストリー" }, { t: "ブラシ" }, { t: "ブラシ設定", key: "F5" },
    { t: "ラーニング" }, { t: "レイヤー", key: "F7", on: true }, { t: "レイヤーカンプ" }, { t: "計測ログ" }, { t: "字形" },
    { t: "修飾キー" }, { t: "情報", key: "F8" }, { t: "色調補正" }, { t: "属性", on: true }, { t: "段落" },
    { t: "段落スタイル" }, { t: "注釈" }, { t: "文字", on: true }, { t: "文字スタイル" },
  ],
  [{ t: "オプション", on: true }, { t: "ツール", on: true }],
  [{ t: "1 名称未設定 1", on: true }, { t: "2 名称未設定 2" }],
];

const sepClasses = ["mt-[5px] mb-[7px]", "mt-[6px] mb-[5px]", "mt-[7px] mb-[5px]", "mt-[7px] mb-[7px]"];

const WindowMenu = () => (
  <div className="absolute left-[899px] top-[34px] w-[351px] h-[1322px] pt-[3px] px-[3px] bg-[#f0f0f0] border border-[#a0a0a0] shadow-[3px_3px_4px_rgba(0,0,0,0.45)] text-[17px] text-[#1e1e1e]">
    {menuGroups.map((group, i) => (
      <div key={i}>
        {group.map((m) => (
          <div key={m.t} className={`h-[30.66px] flex items-center ${m.hot ? "bg-[#0078d7] text-[#e8f2fb]" : ""}`}>
            <span className="w-[28px] shrink-0 flex pl-[4px]">
              {m.on && <Ic w={13} h={13}><path d="M1.5 7l3.5 4.5L11.5 1.5" stroke="#1a1a1a" strokeWidth="2.4" /></Ic>}
            </span>
            <span className="whitespace-nowrap tracking-[-0.4px]">{m.t}</span>
            {m.key && <span className="ml-auto mr-[27px] text-[18px]">{m.key}</span>}
            {m.arrow && <span className="ml-auto mr-[8px] w-0 h-0 border-y-[8px] border-y-transparent border-l-[9px] border-l-[#111]" />}
          </div>
        ))}
        {i < sepClasses.length && <div className={`h-[2px] bg-[#d0d0d0] ${sepClasses[i]}`} />}
      </div>
    ))}
  </div>
);

const Annotations = () => (
  <>
    <svg className="absolute left-[780px] top-[20px]" width="140" height="170" viewBox="0 0 140 170" fill="none">
      <path d="M122 4L27 160" stroke="#e50012" strokeWidth="4" />
    </svg>
    <div className="absolute left-[751px] top-[180px] w-[81px] h-[81px] rounded-full border-[3px] border-[#d8121c] flex items-center justify-center text-[#e01420] text-[58px] leading-none [font-family:'Noto_Sans',sans-serif] font-light">1</div>
    <div className="absolute left-[1247px] top-[163px] w-[81px] h-[81px] rounded-full border-[3px] border-[#d8121c] flex items-center justify-center text-[#e01420] text-[58px] leading-none [font-family:'Noto_Sans',sans-serif] font-light">2</div>
  </>
);

const Chrome = ({ children }) => (
  <span className="relative flex">
    <svg width="36" height="38" viewBox="0 0 36 38" className="shrink-0">
      <path d="M18 2a17 17 0 0 1 15 9H18a8 8 0 0 0-7 4L5 7a17 17 0 0 1 13-5z" fill="#db4437" />
      <path d="M5 7l7 13a8 8 0 0 0 6 7l-5 9A17 17 0 0 1 5 7z" fill="#0f9d58" />
      <path d="M33 11a17 17 0 0 1-20 25l7-10a8 8 0 0 0 4-12l-6-3z" fill="#ffcd40" />
      <circle cx="18" cy="19" r="7" fill="#4285f4" stroke="#fff" strokeWidth="1.5" />
    </svg>
    {children}
  </span>
);

const trayStroke = "#e6e6e6";

function TaskApp({ cls = "", on, w, children }) {
  return (
    <div className={`${w} ${cls} shrink-0 flex items-center justify-center relative`}>
      {children}
      {on && <span className="absolute inset-x-0 bottom-0 h-[4px] bg-[#76b9ed]" />}
    </div>
  );
}

const Taskbar = () => (
  <div className="h-[67px] shrink-0 flex items-stretch relative bg-[linear-gradient(90deg,#0b1a34_0%,#0b1a34_36%,#1e2430_44%,#353535_52%,#3a3a3a_90%,#2a2a34_95%,#0b1329_100%)]">
    <div className="w-[80px] flex items-center justify-center">
      <svg width="28" height="28" viewBox="0 0 28 28"><path d="M0 4l12-2v11H0zM14 2l14-2v13H14zM0 15h12v11L0 24zM14 15h14v13l-14-2z" fill="#fff" /></svg>
    </div>
    <div className="w-[574px] bg-[#f0f0f0] flex items-center pl-[17px] text-[20px] text-[#2a2a2a]">
      <span className="w-[34px] h-[34px] rounded-full border-[4px] border-[#141414]" />
      <span className="ml-[14px]">ここに入力して検索</span>
      <svg width="16" height="30" viewBox="0 0 16 30" className="ml-auto mr-[27px]"><rect x="4" y="1" width="8" height="18" rx="4" fill="#222" stroke="#222" /><path d="M2 12v4a6 6 0 0 0 12 0v-4M8 22v5M4 28h8" stroke="#222" strokeWidth="2" fill="none" /></svg>
    </div>
    <div className="flex items-center ml-[29px] w-[20px]">
      <svg width="20" height="28" viewBox="0 0 20 28"><path d="M1 1h14M1 27h14" stroke="#e6e6e6" strokeWidth="1.5" /><rect x="1" y="7" width="14" height="14" stroke="#e6e6e6" strokeWidth="1.5" fill="none" /><path d="M18 1v3M18 7v3M18 13v3M18 19v3M18 25v2" stroke="#e6e6e6" strokeWidth="1.5" /></svg>
    </div>
    <div className="flex items-center ml-[55px] w-[40px] justify-center text-[#0f7fd8]"><FaEdgeLegacy size={36} /></div>
    <TaskApp cls="ml-[31px]" on w="w-[66px]">
      <svg width="36" height="34" viewBox="0 0 36 34"><path d="M1 3h13l3 4h18v26H1z" fill="#f9d776" /><path d="M1 3h10v8H1z" fill="#e8b93a" /><path d="M9 33V21h18v12h-5v-8h-8v8z" fill="#2d93d6" /></svg>
    </TaskApp>
    <TaskApp cls="ml-[16px]" w="w-[66px]">
      <svg width="38" height="42" viewBox="0 0 38 42"><path d="M12 10V6a7 7 0 0 1 14 0v4" stroke="#e0e0e0" strokeWidth="2.5" fill="none" /><path d="M2 10h34v32H2z" fill="#fff" /><rect x="10" y="18" width="8" height="8" fill="#f25022" /><rect x="20" y="18" width="8" height="8" fill="#7fba00" /><rect x="10" y="28" width="8" height="8" fill="#00a4ef" /><rect x="20" y="28" width="8" height="8" fill="#ffb900" /></svg>
    </TaskApp>
    <TaskApp cls="ml-[17px]" w="w-[66px]">
      <svg width="38" height="36" viewBox="0 0 38 36"><path d="M1 12L19 1l18 11v23H1z" fill="#fff" /><path d="M1 14l18 10 18-10-18 5z" fill="#111" /><path d="M19 11l8 4-8 9-2-5-6-3z" fill="#111" /></svg>
    </TaskApp>
    <TaskApp cls="ml-[16px]" on w="w-[67px]">
      <Chrome><span className="absolute right-[-2px] bottom-[-6px] w-[24px] h-[28px] rounded-[12px_12px_12px_12px] bg-[#d81b60] text-white text-[9px] leading-[28px] text-center">演</span></Chrome>
    </TaskApp>
    <TaskApp cls="ml-[15px]" on w="w-[68px]">
      <svg width="34" height="42" viewBox="0 0 34 42"><path d="M10 1l22 5-9 34L2 34z" fill="#9fd6ea" /><path d="M10 1l22 5-3 9-22-4z" fill="#cfeaf5" /><path d="M2 34l21 6-2-6z" fill="#4a8fb0" /></svg>
    </TaskApp>
    <TaskApp cls="ml-[15px]" on w="w-[69px]">
      <svg width="36" height="38" viewBox="0 0 36 38"><rect width="36" height="38" rx="5" fill="#da1f26" /><circle cx="18" cy="19" r="11" stroke="#fff" strokeWidth="2" fill="none" /><path d="M18 4c4 5 9 8 13 10M7 14c3 8 9 13 18 14M11 27c0-7 5-14 13-17" stroke="#fff" strokeWidth="2" fill="none" /></svg>
    </TaskApp>
    <TaskApp cls="ml-[8px] bg-[#5e5e5e]" on w="w-[80px]">
      <span className="w-[35px] h-[37px] rounded-[4px] bg-[#001e36] border-[3px] border-[#31a8ff] text-[#31a8ff] text-[20px] font-semibold leading-[30px] text-center">Ps</span>
    </TaskApp>
    <TaskApp cls="ml-[9px]" on w="w-[67px]">
      <Chrome><span className="absolute right-[-3px] bottom-[-4px] w-[22px] h-[27px] rounded-[11px] bg-[#ef7a1a] text-white text-[12px] leading-[27px] text-center">L</span></Chrome>
    </TaskApp>
    <TaskApp cls="ml-[15px]" on w="w-[68px]">
      <span className="w-[36px] h-[37px] bg-[#2a1200] border-[3px] border-[#ff7f18] text-[#ff8a1f] text-[20px] font-semibold leading-[30px] text-center">Ai</span>
    </TaskApp>
    <div className="ml-auto flex items-center text-[#e6e6e6]">
      <svg width="26" height="32" viewBox="0 0 26 32" fill="none"><circle cx="9" cy="16" r="4" stroke={trayStroke} strokeWidth="1.5" /><path d="M3 32c0-7 3-12 6-12s6 5 6 12" stroke={trayStroke} strokeWidth="1.5" /><circle cx="18" cy="5" r="4" stroke={trayStroke} strokeWidth="1.5" /><path d="M15 13c3-4 9-1 10 8" stroke={trayStroke} strokeWidth="1.5" /></svg>
      <svg width="22" height="14" viewBox="0 0 22 14" className="ml-[37px]"><path d="M1 13L11 2l10 11" stroke={trayStroke} strokeWidth="1.6" fill="none" /></svg>
      <svg width="26" height="30" viewBox="0 0 26 30" className="ml-[15px]" fill="none"><path d="M1 10h6l6-7v24l-6-7H1z" stroke={trayStroke} strokeWidth="1.5" /><path d="M17 9c3 4 3 8 0 12M21 5c4 6 4 14 0 20" stroke="#999" strokeWidth="1.5" /></svg>
      <svg width="28" height="26" viewBox="0 0 28 26" className="ml-[15px]" fill="none"><rect x="3" y="3" width="24" height="20" fill="#fff" /><path d="M0 8h3M0 18h3M3 3h5v20H3z" stroke={trayStroke} strokeWidth="1.6" /></svg>
      <svg width="26" height="28" viewBox="0 0 26 28" className="ml-[15px]" fill="none"><path d="M1 22a20 20 0 0 1 20-20M6 24a14 14 0 0 1 14-16M12 25a8 8 0 0 1 8-11" stroke={trayStroke} strokeWidth="1.8" /><path d="M18 17l4 9h-8z" fill="#aaa" /></svg>
      <span className="ml-[8px] w-[26px] text-[34px] font-light leading-none text-center">A</span>
      <span className="ml-[18px] w-[100px] flex flex-col items-center text-[19px] leading-[32px] -mt-[2px] whitespace-nowrap">
        <span>13:32</span><span>2019/12/24</span>
      </span>
      <span className="ml-[31px] mr-[41px] w-[28px] relative">
        <span className="block w-[28px] h-[24px] bg-white pt-[5px] pl-[5px]">
          <span className="block w-[16px] h-[2px] bg-[#333]" />
          <span className="block w-[16px] h-[2px] bg-[#333] mt-[4px]" />
          <span className="block w-[10px] h-[2px] bg-[#333] mt-[4px]" />
        </span>
        <span className="block w-0 h-0 mx-auto border-x-[5px] border-x-transparent border-t-[5px] border-t-white" />
      </span>
    </div>
  </div>
);

export default function App() {
  return (
    <div className="relative w-[2560px] h-[1440px] overflow-hidden flex flex-col bg-[#3a3a3a] [font-family:'Noto_Sans_CJK_JP',sans-serif] [font-feature-settings:'palt']">
      <MenuBar />
      <OptionsBar />
      <div className="flex-1 flex min-h-0">
        <LeftBar />
        <CenterColumn />
        <RightColumn />
      </div>
      <Taskbar />
      <CharacterPanel />
      <WindowMenu />
      <Annotations />
    </div>
  );
}
